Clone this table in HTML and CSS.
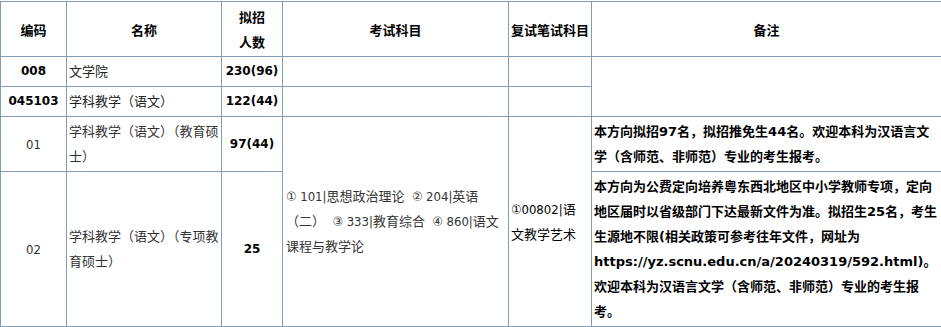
FILE: index.html
```html
<!DOCTYPE html>
<html lang="zh-CN">
<head>
<meta charset="utf-8">
<title>招生目录</title>
<link rel="stylesheet" href="styles.css">
</head>
<body>
<table class="plan">
  <colgroup>
    <col class="c-code">
    <col class="c-name">
    <col class="c-num">
    <col class="c-exam">
    <col class="c-retest">
    <col class="c-note">
  </colgroup>
  <thead>
    <tr>
      <th>编码</th>
      <th>名称</th>
      <th>拟招<br>人数</th>
      <th>考试科目</th>
      <th>复试笔试科目</th>
      <th>备注</th>
    </tr>
  </thead>
  <tbody>
    <tr class="row-s">
      <td class="center num">008</td>
      <td class="plain">文学院</td>
      <td class="center num">230(96)</td>
      <td></td>
      <td></td>
      <td rowspan="2"></td>
    </tr>
    <tr class="row-s">
      <td class="center num">045103</td>
      <td class="plain">学科教学（语文）</td>
      <td class="center num">122(44)</td>
      <td></td>
      <td></td>
    </tr>
    <tr>
      <td class="center gray">01</td>
      <td class="gray">学科教学（语文）（教育硕士）</td>
      <td class="center num">97(44)</td>
      <td rowspan="2" class="gray exam">① 101|思想政治理论&nbsp; ② 204|英语（二）&nbsp; ③ 333|教育综合&nbsp; ④ 860|语文课程与教学论</td>
      <td rowspan="2" class="black retest">①00802|语文教学艺术</td>
      <td class="note note-narrow">本方向拟招97名，拟招推免生44名。欢迎本科为汉语言文学（含师范、非师范）专业的考生报考。</td>
    </tr>
    <tr>
      <td class="center gray">02</td>
      <td class="gray">学科教学（语文）（专项教育硕士）</td>
      <td class="center num">25</td>
      <td class="note">本方向为公费定向培养粤东西北地区中小学教师专项，定向地区届时以省级部门下达最新文件为准。拟招生25名，考生生源地不限(相关政策可参考往年文件，网址为https://yz.scnu.edu.cn/a/20240319/592.html)。欢迎本科为汉语言文学（含师范、非师范）专业的考生报考。</td>
    </tr>
  </tbody>
</table>
</body>
</html>
```
FILE: styles.css
```css
html, body {
  margin: 0;
  padding: 0;
  background: #fff;
}
body {
  padding-top: 1px;
  font-family: "DejaVu Sans Condensed", "Noto Sans CJK SC", sans-serif;
  font-size: 13px;
  color: #333;
}
.plan {
  width: 941px;
  table-layout: fixed;
  border-collapse: collapse;
}
.c-code { width: 66px; }
.c-name { width: 155px; }
.c-num { width: 61px; }
.c-exam { width: 226px; }
.c-retest { width: 83px; }
.c-note { width: 350px; }
.plan th,
.plan td {
  border: 1px solid #7f9db9;
  padding: 2px 2px;
  line-height: 25px;
  vertical-align: middle;
  text-align: left;
}
.plan th {
  font-weight: bold;
  color: #000;
  text-align: center;
  font-family: "Noto Sans CJK SC", sans-serif;
}
.plan .row-s td {
  height: 25px;
}
.plan td.center { text-align: center; }
.plan td.num {
  font-family: "DejaVu Sans", "Noto Sans CJK SC", sans-serif;
  font-size: 12px;
  font-weight: bold;
  color: #000;
}
.plan td.plain { color: #222; }
.plan td.gray { color: #333; }
.plan td.black { color: #000; }
.plan td.exam { padding-left: 3px; }
.plan td.retest { padding-right: 8px; }
.plan td.note {
  font-family: "DejaVu Sans", "Noto Sans CJK SC", sans-serif;
  font-weight: bold;
  color: #000;
  padding-right: 1px;
}
.plan td.note-narrow {
  padding-right: 11px;
}
```
